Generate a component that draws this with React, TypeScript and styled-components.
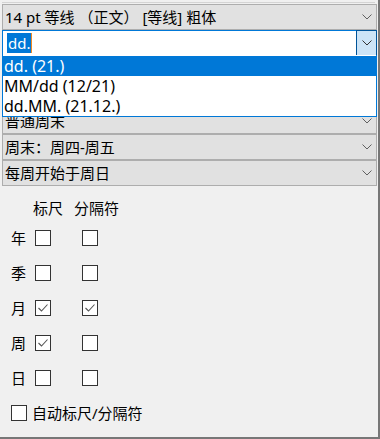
import React from "react"
import styled, { createGlobalStyle } from "styled-components"

const GlobalStyle = createGlobalStyle`
  html, body {
    margin: 0;
    padding: 0;
    background: #f0f0f0;
  }
  body {
    font-family: "Noto Sans", "Noto Sans CJK SC", sans-serif;
    font-size: 15px;
    color: #000;
  }
`

const Panel = styled.div`
  box-sizing: border-box;
  width: 380px;
  height: 439px;
  background: #f0f0f0;
  border-right: 2px solid #777;
  border-bottom: 2px solid #777;
  overflow: hidden;
`

// remnant of the control above, cut off by the screenshot
const TopEdge = styled.div`
  height: 3px;
  margin: 0 3px 1px 2px;
  border-bottom: 1px solid #d4d4d4;
  box-sizing: border-box;
`

const ComboStack = styled.div`
  position: relative;
  display: flex;
  flex-direction: column;
  width: 375px;
  margin-left: 2px;
`

const Combo = styled.div`
  box-sizing: border-box;
  display: flex;
  align-items: center;
  justify-content: space-between;
  height: 26px;
  padding: 0 4px 0 2px;
  background: #e1e1e1;
  border: 1px solid #adadad;
  font-size: 15px;
  line-height: 20px;
  white-space: nowrap;
`

const EditCombo = styled.div`
  box-sizing: border-box;
  display: flex;
  align-items: stretch;
  height: 26px;
  background: #fff;
  border: 1px solid #0078d7;
`

const EditField = styled.div`
  flex: 1;
  display: flex;
  align-items: center;
  padding-left: 4px;
  font-size: 15px;
`

const Selected = styled.span`
  background: #0078d7;
  color: #fff;
  line-height: 20px;
  padding: 0 1px;
`

const Caret = styled.span`
  width: 1px;
  height: 20px;
  background: #f08a24;
`

const DropButton = styled.div`
  box-sizing: border-box;
  display: flex;
  align-items: center;
  justify-content: center;
  width: 21px;
  margin: -1px -1px -1px 0;
  background: #cce4f7;
  border: 1px solid #005499;
`

const DropList = styled.div`
  position: absolute;
  top: 51px;
  left: 0;
  box-sizing: border-box;
  width: 375px;
  background: #fff;
  border: 1px solid #0078d7;
  border-top: none;
  padding-top: 1px;
`

const ListItem = styled.div<{ $active?: boolean }>`
  height: 20px;
  padding-left: 1px;
  font-size: 16px;
  line-height: 20px;
  white-space: nowrap;
  background: ${(p) => (p.$active ? "#0078d7" : "transparent")};
  color: ${(p) => (p.$active ? "#fff" : "#000")};
`

const Section = styled.div`
  margin-top: 10px;
  padding-left: 11px;
`

const Grid = styled.div`
  display: grid;
  grid-template-columns: 22px 41px auto;
  grid-auto-rows: 35px;
  grid-template-rows: 24px;
  align-items: center;
`

const HeaderCell = styled.div`
  font-size: 15px;
  line-height: 20px;
  white-space: nowrap;
`

const RowLabel = styled.div`
  font-size: 15px;
  line-height: 20px;
`

const BoxCell = styled.div<{ $offset: number }>`
  display: flex;
  padding-left: ${(p) => p.$offset}px;
`

const Box = styled.span`
  box-sizing: border-box;
  display: inline-flex;
  align-items: center;
  justify-content: center;
  width: 16px;
  height: 16px;
  background: #fff;
  border: 1px solid #333;
`

const AutoRow = styled.label`
  display: flex;
  align-items: center;
  gap: 5px;
  height: 35px;
  font-size: 15px;
`

function Chevron({ color = "#606060" }: { color?: string }) {
  return (
    <svg width="10" height="6" viewBox="0 0 10 6">
      <polyline points="0.5,0.5 5,5 9.5,0.5" fill="none" stroke={color} strokeWidth="1" />
    </svg>
  )
}

function CheckBox({ checked }: { checked?: boolean }) {
  return (
    <Box>
      {checked && (
        <svg width="14" height="14" viewBox="0 0 14 14">
          <polyline points="2.5,7 5.5,10 11.5,3.5" fill="none" stroke="#555" strokeWidth="1.1" />
        </svg>
      )}
    </Box>
  )
}

const rows = [
  { label: "年", ruler: false, sep: false },
  { label: "季", ruler: false, sep: false },
  { label: "月", ruler: true, sep: true },
  { label: "周", ruler: true, sep: false },
  { label: "日", ruler: false, sep: false },
]

const formats = ["dd. (21.)", "MM/dd (12/21)", "dd.MM. (21.12.)"]

export default function App() {
  return (
    <>
      <GlobalStyle />
      <Panel>
        <TopEdge />
        <ComboStack>
          <Combo>
            <span>14 pt 等线 （正文） [等线] 粗体</span>
            <Chevron />
          </Combo>
          <EditCombo>
            <EditField>
              <Selected>dd.</Selected>
              <Caret />
            </EditField>
            <DropButton>
              <Chevron color="#333" />
            </DropButton>
          </EditCombo>
          {/* two combos hidden under the open list */}
          <Combo />
          <Combo />
          <Combo>
            <span>普通周末</span>
            <Chevron />
          </Combo>
          <Combo>
            <span>周末：周四-周五</span>
            <Chevron />
          </Combo>
          <Combo>
            <span>每周开始于周日</span>
            <Chevron />
          </Combo>

          <DropList>
            {formats.map((f, i) => (
              <ListItem key={f} $active={i === 0}>
                {f}
              </ListItem>
            ))}
          </DropList>
        </ComboStack>

        <Section>
          <Grid>
            <div />
            <HeaderCell>标尺</HeaderCell>
            <HeaderCell>分隔符</HeaderCell>
            {rows.map((r) => (
              <React.Fragment key={r.label}>
                <RowLabel>{r.label}</RowLabel>
                <BoxCell $offset={2}>
                  <CheckBox checked={r.ruler} />
                </BoxCell>
                <BoxCell $offset={8}>
                  <CheckBox checked={r.sep} />
                </BoxCell>
              </React.Fragment>
            ))}
          </Grid>
          <AutoRow>
            <CheckBox />
            <span>自动标尺/分隔符</span>
          </AutoRow>
        </Section>
      </Panel>
    </>
  )
}
